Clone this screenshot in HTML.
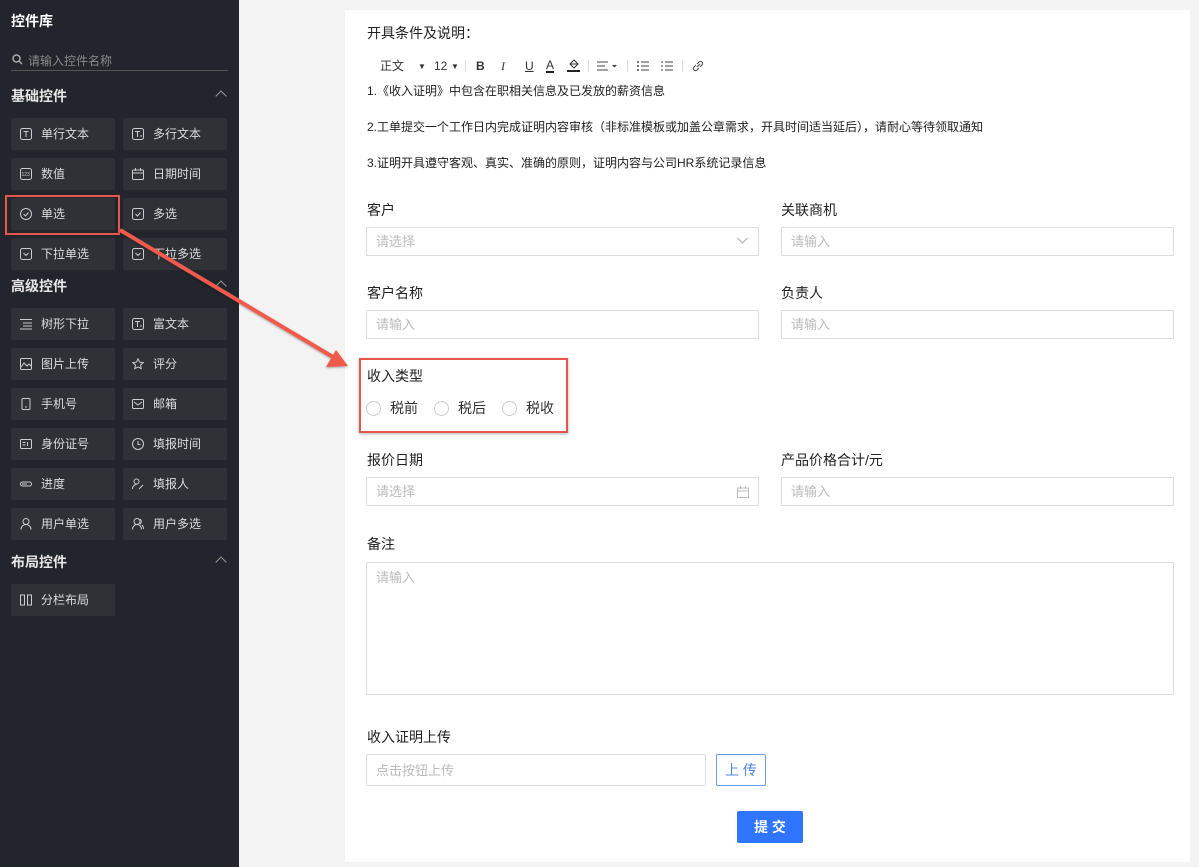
<!DOCTYPE html>
<html><head><meta charset="utf-8"><style>
*{margin:0;padding:0;box-sizing:border-box}
body{width:1199px;height:867px;background:#f3f3f3;font-family:"Liberation Sans","Noto Sans CJK SC",sans-serif;position:relative;overflow:hidden}
.sb{position:absolute;left:0;top:0;width:239px;height:867px;background:#23252c}
.a{position:absolute}
.st{color:#fff;font-size:14px;font-weight:bold}
.sec{color:#e6e6e6;font-size:14px;font-weight:bold}
.chev{position:absolute;width:8px;height:8px;border-left:1.5px solid #999;border-top:1.5px solid #999;transform:rotate(45deg)}
.it{position:absolute;width:104px;height:32px;background:#303137;border-radius:2px;color:#dcdcdc;font-size:12px;line-height:32px;padding-left:30px}
.it svg{position:absolute;left:9px;top:10px}
.card{position:absolute;left:345px;top:10px;width:845px;height:852px;background:#fff}
.lbl{position:absolute;font-size:14px;color:#222}
.inp{position:absolute;border:1px solid #ddd;height:29px;font-size:13px;color:#bbb;line-height:27px;padding-left:9px;border-radius:1px}
.t12{position:absolute;font-size:12px;color:#222}
.rd{display:inline-block;width:15px;height:15px;border:1px solid #ccc;border-radius:50%;vertical-align:-3px;margin-right:9px}
.tb{position:absolute;top:59px;font-size:12px;color:#333;line-height:14px}
.sep{position:absolute;top:60px;width:1px;height:12px;background:#ddd}
</style></head><body>
<div class="sb">
<div class="a st" style="left:11px;top:11px">控件库</div>
<svg class="a" style="left:12px;top:54px" width="11" height="11" viewBox="0 0 11 11"><circle cx="4.5" cy="4.5" r="3.5" fill="none" stroke="#aaa" stroke-width="1.5"/><path d="M7 7l3 3" stroke="#aaa" stroke-width="1.5"/></svg>
<div class="a" style="left:28px;top:52px;font-size:12px;color:#8a8a8a">请输入控件名称</div>
<div class="a" style="left:11px;top:70px;width:217px;height:1px;background:#555"></div>
<div class="a sec" style="left:11px;top:86px">基础控件</div><div class="chev" style="left:217px;top:92px"></div>
<div class="it" style="left:11px;top:118px"><svg width="12" height="12"><rect x=".5" y=".5" width="11" height="11" rx="2" fill="none" stroke="#ccc"/><path d="M3.5 3.5h5M6 3.5v5.5" stroke="#ccc"/></svg>单行文本</div>
<div class="it" style="left:123px;top:118px"><svg width="12" height="12"><rect x=".5" y=".5" width="11" height="11" rx="2" fill="none" stroke="#ccc"/><path d="M3 3.5h5M5.5 3.5v5.5M8 8h2" stroke="#ccc"/></svg>多行文本</div>
<div class="it" style="left:11px;top:158px"><svg width="12" height="12"><rect x=".5" y=".5" width="11" height="11" rx="2" fill="none" stroke="#ccc"/><text x="1.5" y="8" font-size="5" fill="#ccc">123</text></svg>数值</div>
<div class="it" style="left:123px;top:158px"><svg width="12" height="12"><rect x=".5" y="2" width="11" height="9.5" rx="1" fill="none" stroke="#ccc"/><path d="M3.5 0v3M8.5 0v3M.5 5h11" stroke="#ccc"/></svg>日期时间</div>
<div class="it" style="left:11px;top:198px"><svg width="12" height="12"><circle cx="6" cy="6" r="5.5" fill="none" stroke="#ccc"/><path d="M3.5 6l2 2 3-3.5" fill="none" stroke="#ccc"/></svg>单选</div>
<div class="it" style="left:123px;top:198px"><svg width="12" height="12"><rect x=".5" y=".5" width="11" height="11" rx="2" fill="none" stroke="#ccc"/><path d="M3.5 6l2 2 3-3.5" fill="none" stroke="#ccc"/></svg>多选</div>
<div class="it" style="left:11px;top:238px"><svg width="12" height="12"><rect x=".5" y=".5" width="11" height="11" rx="2" fill="none" stroke="#ccc"/><path d="M3.5 5l2.5 2.5 2.5-2.5" fill="none" stroke="#ccc"/></svg>下拉单选</div>
<div class="it" style="left:123px;top:238px"><svg width="12" height="12"><rect x=".5" y=".5" width="11" height="11" rx="2" fill="none" stroke="#ccc"/><path d="M3.5 5l2.5 2.5 2.5-2.5" fill="none" stroke="#ccc"/></svg>下拉多选</div>
<div class="a sec" style="left:11px;top:276px">高级控件</div><div class="chev" style="left:217px;top:282px"></div>
<div class="it" style="left:11px;top:308px"><svg width="12" height="12"><path d="M0 1.5h12M3 5h9M3 8h9M0 11h12" stroke="#ccc"/></svg>树形下拉</div>
<div class="it" style="left:123px;top:308px"><svg width="12" height="12"><rect x=".5" y=".5" width="11" height="11" rx="2" fill="none" stroke="#ccc"/><path d="M3 3.5h5M5.5 3.5v5.5M8 8h2" stroke="#ccc"/></svg>富文本</div>
<div class="it" style="left:11px;top:348px"><svg width="12" height="12"><rect x=".5" y=".5" width="11" height="11" rx="1" fill="none" stroke="#ccc"/><path d="M1 9l3-4 3 3 2-2 2 2" fill="none" stroke="#ccc"/></svg>图片上传</div>
<div class="it" style="left:123px;top:348px"><svg width="12" height="12"><path d="M6 .8l1.6 3.4 3.6.4-2.7 2.5.8 3.6L6 8.9l-3.3 1.8.8-3.6L.8 4.6l3.6-.4z" fill="none" stroke="#ccc"/></svg>评分</div>
<div class="it" style="left:11px;top:388px"><svg width="12" height="12"><rect x="2" y=".5" width="8" height="11" rx="1" fill="none" stroke="#ccc"/><path d="M5 9h2" stroke="#ccc"/></svg>手机号</div>
<div class="it" style="left:123px;top:388px"><svg width="12" height="12"><rect x=".5" y="1.5" width="11" height="9" rx="1" fill="none" stroke="#ccc"/><path d="M2 4l4 3 4-3" fill="none" stroke="#ccc"/></svg>邮箱</div>
<div class="it" style="left:11px;top:428px"><svg width="12" height="12"><rect x=".5" y="1.5" width="11" height="9" rx="1" fill="none" stroke="#ccc"/><path d="M2.5 4.5h3M2.5 7h3M7.5 4v4" stroke="#ccc"/></svg>身份证号</div>
<div class="it" style="left:123px;top:428px"><svg width="12" height="12"><circle cx="6" cy="6" r="5.5" fill="none" stroke="#ccc"/><path d="M6 3v3.5h2.5" fill="none" stroke="#ccc"/></svg>填报时间</div>
<div class="it" style="left:11px;top:468px"><svg width="12" height="12"><rect x=".5" y="4" width="11" height="4" rx="2" fill="none" stroke="#ccc"/><path d="M2 6h5" stroke="#ccc"/></svg>进度</div>
<div class="it" style="left:123px;top:468px"><svg width="12" height="12"><circle cx="4.5" cy="3.5" r="2.5" fill="none" stroke="#ccc"/><path d="M.5 11c0-3 2-4.5 4-4.5M7 11l4-4" fill="none" stroke="#ccc"/></svg>填报人</div>
<div class="it" style="left:11px;top:508px"><svg width="12" height="12"><circle cx="6" cy="3.5" r="3" fill="none" stroke="#ccc"/><path d="M1 11.5c0-3 2.5-5 5-5s5 2 5 5" fill="none" stroke="#ccc"/></svg>用户单选</div>
<div class="it" style="left:123px;top:508px"><svg width="12" height="12"><circle cx="5" cy="3.5" r="3" fill="none" stroke="#ccc"/><path d="M.5 11.5c0-3 2-5 4.5-5s4.5 2 4.5 5M8 1a3 3 0 010 5M10 7c1 1 1.5 2.5 1.5 4" fill="none" stroke="#ccc"/></svg>用户多选</div>
<div class="a sec" style="left:11px;top:552px">布局控件</div><div class="chev" style="left:217px;top:558px"></div>
<div class="it" style="left:11px;top:584px"><svg width="12" height="12"><rect x=".5" y="1" width="4" height="10" fill="none" stroke="#ccc"/><rect x="7.5" y="1" width="4" height="10" fill="none" stroke="#ccc"/></svg>分栏布局</div>
<div class="a" style="left:5px;top:195px;width:115px;height:40px;border:2px solid #e8554a"></div>
</div>

<div class="card"></div>
<div class="lbl" style="left:367px;top:23px">开具条件及说明：</div>
<div class="tb" style="left:380px">正文</div>
<div class="tb" style="left:418px;font-size:8px;top:60px">▼</div>
<div class="tb" style="left:434px">12</div>
<div class="tb" style="left:451px;font-size:8px;top:60px">▼</div>
<div class="sep" style="left:465px"></div>
<div class="tb" style="left:476px;font-weight:bold">B</div>
<div class="tb" style="left:501px;font-style:italic;font-family:'Liberation Serif',serif">I</div>
<div class="tb" style="left:525px;text-decoration:underline">U</div>
<div class="tb" style="left:546px;border-bottom:2px solid #222;line-height:12px">A</div>
<svg class="a" style="left:567px;top:58px" width="13" height="15"><path d="M3 6l4-4 4 4-4 4z" fill="none" stroke="#333"/><path d="M3 6h8" stroke="#333"/><rect x="0" y="12" width="13" height="2" fill="#222"/></svg>
<div class="sep" style="left:588px"></div>
<svg class="a" style="left:597px;top:60px" width="24" height="12"><path d="M0 2h11M0 6h8M0 10h11" stroke="#444"/><path d="M15 5l2.5 2.5L20 5" fill="#444"/></svg>
<div class="sep" style="left:627px"></div>
<svg class="a" style="left:637px;top:60px" width="12" height="12"><path d="M4 2h8M4 6h8M4 10h8" stroke="#444"/><circle cx="1" cy="2" r="1" fill="#444"/><circle cx="1" cy="6" r="1" fill="#444"/><circle cx="1" cy="10" r="1" fill="#444"/></svg>
<svg class="a" style="left:661px;top:60px" width="12" height="12"><path d="M4 2h8M4 6h8M4 10h8" stroke="#444"/><path d="M0 2h2M0 6h2M0 10h2" stroke="#444"/></svg>
<div class="sep" style="left:682px"></div>
<svg class="a" style="left:692px;top:60px" width="12" height="12"><path d="M5 7l3-3M4 5l-2 2a2 2 0 003 3l2-2M8 7l2-2a2 2 0 00-3-3L5 4" fill="none" stroke="#444"/></svg>
<div class="t12" style="left:367px;top:82px">1.《收入证明》中包含在职相关信息及已发放的薪资信息</div>
<div class="t12" style="left:367px;top:118px">2.工单提交一个工作日内完成证明内容审核（非标准模板或加盖公章需求，开具时间适当延后），请耐心等待领取通知</div>
<div class="t12" style="left:367px;top:154px">3.证明开具遵守客观、真实、准确的原则，证明内容与公司HR系统记录信息</div>

<div class="lbl" style="left:367px;top:200px">客户</div>
<div class="inp" style="left:366px;top:227px;width:393px">请选择<svg style="position:absolute;right:10px;top:9px" width="11" height="7"><path d="M.5 1l5 5 5-5" fill="none" stroke="#aaa"/></svg></div>
<div class="lbl" style="left:781px;top:200px">关联商机</div>
<div class="inp" style="left:781px;top:227px;width:393px">请输入</div>
<div class="lbl" style="left:367px;top:283px">客户名称</div>
<div class="inp" style="left:366px;top:310px;width:393px">请输入</div>
<div class="lbl" style="left:781px;top:283px">负责人</div>
<div class="inp" style="left:781px;top:310px;width:393px">请输入</div>

<div class="lbl" style="left:367px;top:366px">收入类型</div>
<div class="a" style="left:366px;top:398px;font-size:14px;color:#333"><span class="rd"></span>税前<span style="margin-left:16px" class="rd"></span>税后<span style="margin-left:16px" class="rd"></span>税收</div>
<div class="a" style="left:359px;top:358px;width:209px;height:75px;border:2px solid #e8554a;box-shadow:0 1px 3px rgba(0,0,0,.3)"></div>

<div class="lbl" style="left:367px;top:450px">报价日期</div>
<div class="inp" style="left:366px;top:477px;width:393px">请选择<svg style="position:absolute;right:9px;top:8px" width="12" height="12"><rect x=".5" y="2" width="11" height="9.5" fill="none" stroke="#bbb"/><path d="M3.5 0v3M8.5 0v3M.5 5h11" stroke="#bbb"/></svg></div>
<div class="lbl" style="left:781px;top:450px">产品价格合计/元</div>
<div class="inp" style="left:781px;top:477px;width:393px">请输入</div>

<div class="lbl" style="left:367px;top:534px">备注</div>
<div class="inp" style="left:366px;top:562px;width:808px;height:133px;line-height:30px">请输入</div>

<div class="lbl" style="left:367px;top:727px">收入证明上传</div>
<div class="inp" style="left:366px;top:754px;width:340px;height:32px;line-height:32px">点击按钮上传</div>
<div class="a" style="left:716px;top:754px;width:50px;height:32px;border:1px solid #6a9af0;border-radius:2px;color:#4d86ef;font-size:14px;text-align:center;line-height:30px">上 传</div>
<div class="a" style="left:737px;top:811px;width:66px;height:32px;background:#2f75ff;border-radius:2px;color:#fff;font-size:14px;text-align:center;line-height:32px;font-weight:bold">提 交</div>

<svg class="a" style="left:0;top:0" width="1199" height="867"><defs><filter id="s"><feDropShadow dx="0" dy="1" stdDeviation="1" flood-opacity=".35"/></filter></defs>
<g filter="url(#s)"><path d="M120 230L333 357" stroke="#ef5a4b" stroke-width="4"/><path d="M348 366L326 367L336 350Z" fill="#ef5a4b"/></g></svg>
</body></html>
